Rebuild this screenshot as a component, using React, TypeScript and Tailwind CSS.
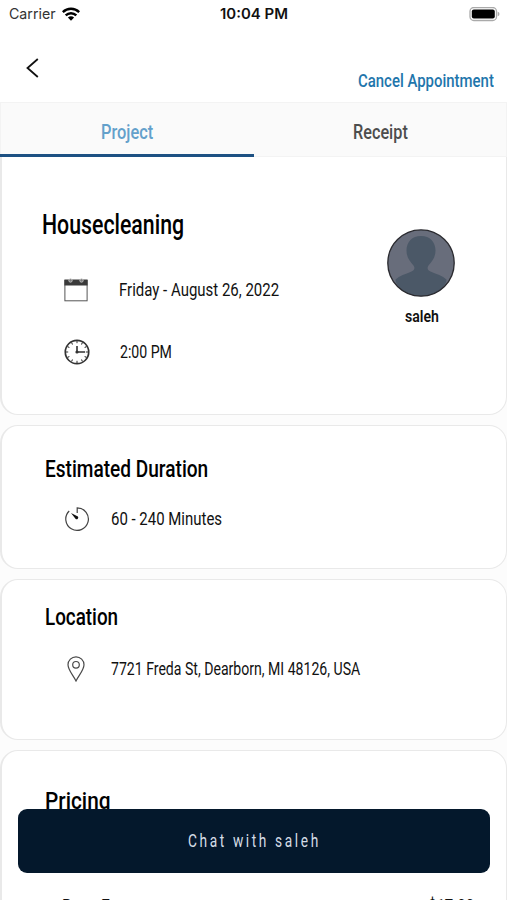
import { useLayoutEffect, useRef, type ReactNode } from "react";

/* Condensed text: the line is squeezed horizontally to the given width. */
function Narrow({ w, className, children }: { w: number; className: string; children: ReactNode }) {
  const ink = useRef<HTMLSpanElement>(null);
  useLayoutEffect(() => {
    if (ink.current) ink.current.style.transform = `scaleX(${w / ink.current.offsetWidth})`;
  }, [w]);
  return (
    <span className={`block shrink-0 whitespace-nowrap ${className}`} style={{ width: w }}>
      <span ref={ink} className="inline-block origin-left">{children}</span>
    </span>
  );
}

const card = "w-full shrink-0 border border-l-2 border-[#e9e9e9] bg-white";

function CalendarIcon() {
  return (
    <svg width="24" height="24" viewBox="0 0 24 24" fill="none">
      <rect x="0.9" y="2.5" width="22.2" height="20.3" stroke="#555" strokeWidth="1" />
      <path d="M.4 1.500h23.200v6H.4z" fill="#3a3a3a" />
      <circle cx="6.500" cy="2.500" r="1.700" fill="#777" stroke="#ccc" strokeWidth=".8" />
      <circle cx="17.500" cy="2.500" r="1.700" fill="#777" stroke="#ccc" strokeWidth=".8" />
    </svg>
  );
}

function ClockIcon() {
  return (
    <svg width="26" height="26" viewBox="0 0 26 26" fill="none" stroke="#333">
      <circle cx="13" cy="13" r="11.7" strokeWidth="1.7" />
      {[0, 30, 60, 90, 120, 150, 180, 210, 240, 270, 300, 330].map((a) => (
        <path key={a} d="M13 2v2.2" strokeWidth="1" transform={`rotate(${a} 13 13)`} />
      ))}
      <path d="M13 7v6h8" strokeWidth="1.6" />
      <circle cx="13" cy="13" r="1.6" fill="#333" stroke="none" />
    </svg>
  );
}

function TimerIcon() {
  return (
    <svg width="26" height="26" viewBox="0 0 26 26" fill="none" stroke="#444">
      <path d="M13.2 7V1.800A11.300 11.300 0 1 1 5.200 5" strokeWidth="1.200" />
      <path d="M7 7l6.900 3.600a1.700 1.700 0 0 1-2.200 2.500z" fill="#111" stroke="none" />
    </svg>
  );
}

function PinIcon() {
  return (
    <svg width="18" height="26" viewBox="0 0 18 26" fill="none" stroke="#4a4a4a" strokeWidth="1.200">
      <path d="M9 25C6.300 19.500 1 14 1 8.800a8 8 0 0 1 16 0C17 14 11.700 19.500 9 25z" />
      <circle cx="9" cy="8.800" r="3.300" />
    </svg>
  );
}

export default function App() {
  return (
    <div className="relative flex h-[900px] w-[507px] flex-col overflow-hidden bg-white font-['Roboto','Liberation_Sans',sans-serif] text-[#111]">
      <header className="flex h-[102px] shrink-0 flex-col">
        <div className="flex h-7 items-center pr-[7px] pl-[9px] font-['Inter',sans-serif]">
          <div className="flex w-[211px] items-center gap-1.5">
            <Narrow w={47} className="text-[14.500px] leading-7 text-[#333]">Carrier</Narrow>
            <svg width="18" height="14" viewBox="0 0 18 14" fill="none" stroke="#000" strokeWidth="2.500">
              <path d="M.8 5.100a11.800 11.800 0 0 1 16.400 0" />
              <path d="M3.700 8.300a7.600 7.600 0 0 1 10.600 0" />
              <path d="M9 13.700L5.900 10.600a4.500 4.500 0 0 1 6.200 0z" fill="#000" stroke="none" />
            </svg>
          </div>
          <Narrow w={68} className="text-[14.500px] leading-7 font-semibold">10:04 PM</Narrow>
          <div className="flex flex-1 justify-end">
            <svg width="31" height="15" viewBox="0 0 31 15">
              <rect x="1" y="0.500" width="26.500" height="13" rx="3.800" fill="#fff" stroke="#aaa" strokeWidth="1.300" />
              <rect x="2.800" y="2.400" width="23" height="9.200" rx="2" fill="#000" />
              <path d="M28.700 4.700v4.500q1.800-.6 1.800-2.250T28.700 4.700z" fill="#aaa" />
            </svg>
          </div>
        </div>
        <div className="flex flex-1 justify-between pr-[13px] pl-[26px]">
          <svg className="mt-[30px]" width="13" height="20" viewBox="0 0 13 20" fill="none" stroke="#111" strokeWidth="1.800">
            <path d="M11.800 1L1.500 10l10.300 9" />
          </svg>
          <Narrow w={136} className="mt-[41px] text-[19px] leading-6 font-medium text-[#1f76ac]">Cancel Appointment</Narrow>
        </div>
      </header>

      <nav className="flex h-[55px] shrink-0 border border-[#f3f3f3] bg-[#fafafa] text-[19.500px] leading-[60px]">
        <div className="-mb-px -ml-px flex w-[254px] justify-center border-b-[3px] border-[#1d5183] text-[#63a0cb]">
          <Narrow w={52} className="h-12 font-medium">Project</Narrow>
        </div>
        <div className="flex flex-1 justify-center text-[#4d4d4d]">
          <Narrow w={55} className="h-12 font-medium">Receipt</Narrow>
        </div>
      </nav>

      <main className="flex flex-1 flex-col gap-[10px] bg-[#fcfcfc]">
        <section className={`${card} flex h-[258px] justify-between rounded-b-[18px] border-t-0 pr-[51px] pl-10`}>
          <div className="flex flex-col pt-[52px]">
            <Narrow w={142} className="text-[27px] leading-8 font-medium text-black">Housecleaning</Narrow>
            <div className="mt-[35px] flex h-7 items-center gap-[31px] pl-[22px]">
              <CalendarIcon />
              <Narrow w={160} className="text-[19px] leading-7">Friday - August 26, 2022</Narrow>
            </div>
            <div className="mt-[34px] flex h-7 items-center gap-[30px] pl-[21.500px]">
              <ClockIcon />
              <Narrow w={52} className="text-[19px] leading-7">2:00 PM</Narrow>
            </div>
          </div>
          <div className="flex flex-col items-center pt-[72px]">
            <svg width="68" height="68" viewBox="0 0 68 68">
              <circle cx="34" cy="34" r="33.300" fill="#686d7b" />
              <path d="M34 7c-9 0-14.500 6-14.500 14.500 0 7 3.500 11 7 15 2 3 .5 5-2.500 6.300C18.500 45 12.500 47 8.500 50.500Q8 54 14 60.500A33 33 0 0 0 54 60.500Q60 54 59.500 50.500C55.500 47 49.500 45 44 42.800c-3-1.300-4.500-3.300-2.500-6.300 3.500-4 7-8 7-15C48.500 13 43 7 34 7z" fill="#4b5867" />
              <circle cx="34" cy="34" r="33.200" fill="none" stroke="#2b2b30" strokeWidth="1.300" />
            </svg>
            <Narrow w={34} className="mt-[7px] ml-[2px] text-[17px] leading-6 font-semibold">saleh</Narrow>
          </div>
        </section>

        <section className={`${card} flex h-[144px] flex-col rounded-[18px] pt-[27px] pl-[43px]`}>
          <Narrow w={163} className="text-[24px] leading-8 font-medium text-black">Estimated Duration</Narrow>
          <div className="mt-5 flex h-7 items-center gap-[21px] pl-[19px]">
            <TimerIcon />
            <Narrow w={111} className="text-[19px] leading-7">60 - 240 Minutes</Narrow>
          </div>
        </section>

        <section className={`${card} flex h-[161px] flex-col rounded-[18px] pt-[21px] pl-[43px]`}>
          <Narrow w={73} className="text-[24px] leading-8 font-medium text-black">Location</Narrow>
          <div className="mt-[22px] flex h-7 items-center gap-[26px] pl-[22px]">
            <PinIcon />
            <Narrow w={249} className="text-[19px] leading-7">7721 Freda St, Dearborn, MI 48126, USA</Narrow>
          </div>
        </section>

        <section className={`${card} flex h-[200px] flex-col rounded-t-[18px] pt-[34px] pr-8 pl-[43px]`}>
          <Narrow w={66} className="text-[24px] leading-8 font-medium text-black">Pricing</Narrow>
          <div className="mt-[75px] flex justify-between pl-[17px]">
            <Narrow w={70} className="text-[19px] leading-7">Base Fare</Narrow>
            <Narrow w={46} className="text-[19px] leading-7 font-medium">$17.00</Narrow>
          </div>
        </section>
      </main>

      <button className="absolute top-[808.500px] left-[18px] flex h-[64.500px] w-[472px] items-center justify-center rounded-[9px] bg-[#04182c] text-[#d5dde6]">
        <Narrow w={133} className="text-[18.500px] leading-7 tracking-[3.500px]">Chat with saleh</Narrow>
      </button>
    </div>
  );
}
